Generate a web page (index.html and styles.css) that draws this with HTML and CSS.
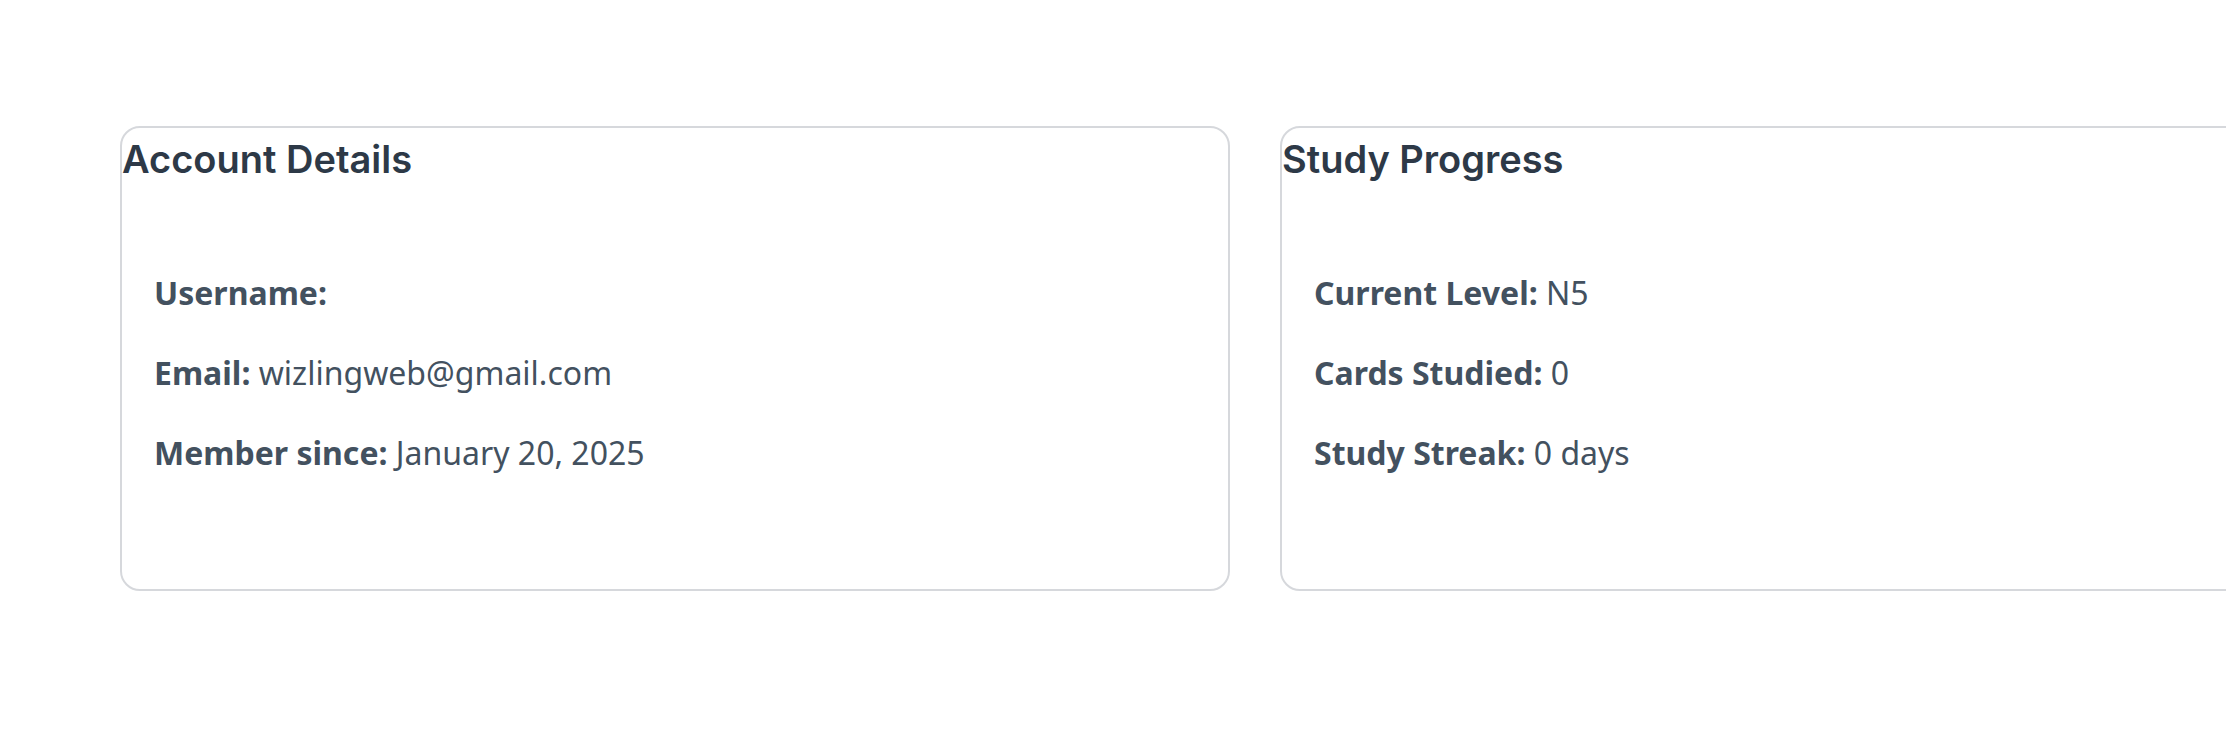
FILE: index.html
```html
<!DOCTYPE html>
<html lang="en">
<head>
<meta charset="utf-8">
<title>Profile</title>
<link rel="stylesheet" href="styles.css">
</head>
<body>
<main class="page">
  <div class="cards">
    <section class="card">
      <h2 class="card-title">Account Details</h2>
      <div class="card-body">
        <p class="row"><strong>Username:</strong> </p>
        <p class="row"><strong>Email:</strong> wizlingweb@gmail.com</p>
        <p class="row"><strong>Member since:</strong> January 20, 2025</p>
      </div>
    </section>
    <section class="card">
      <h2 class="card-title">Study Progress</h2>
      <div class="card-body">
        <p class="row"><strong>Current Level:</strong> N5</p>
        <p class="row"><strong>Cards Studied:</strong> 0</p>
        <p class="row"><strong>Study Streak:</strong> 0 days</p>
      </div>
    </section>
  </div>
</main>
</body>
</html>
```
FILE: styles.css
```css
html, body {
  margin: 0;
  padding: 0;
  background: #ffffff;
  overflow: hidden;
}

.page {
  padding: 126px 0 0 120px;
}

.cards {
  display: flex;
  gap: 50px;
}

.card {
  flex: 0 0 auto;
  width: 1106px;
  border: 2px solid #d6d8dc;
  border-radius: 20px;
  padding: 8px 0 116px 0;
}

.card-title {
  margin: 0;
  font-family: Inter, Roboto, "Liberation Sans", sans-serif;
  font-weight: 600;
  font-size: 38px;
  line-height: 46px;
  color: #2d3947;
}

.card-body {
  padding: 91px 0 0 32px;
  display: flex;
  flex-direction: column;
  gap: 40px;
}

.row {
  margin: 0;
  font-family: "Noto Sans", "Open Sans", sans-serif;
  font-size: 32px;
  line-height: 40px;
  color: #43515f;
}

.row strong {
  font-weight: 700;
}
```
